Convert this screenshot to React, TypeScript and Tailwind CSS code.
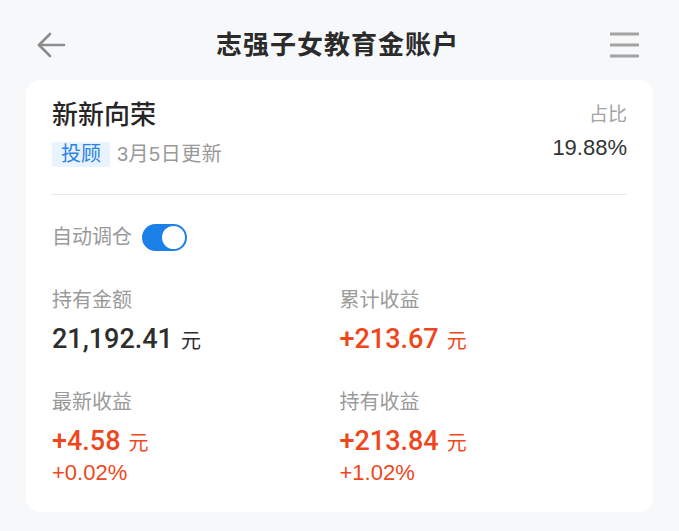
import React from "react";

const FONT = { fontFamily: '"Liberation Sans", "Noto Sans CJK SC", sans-serif' };
const NUM = { fontFamily: 'Roboto, "Liberation Sans", sans-serif' };

function Cell({ label, value, color, pct }: { label: string; value: string; color: string; pct?: string }) {
  return (
    <div className="flex flex-col">
      <div className="h-[24px] leading-[24px] text-[20px] text-[#9a9a9a]">{label}</div>
      <div className={`mt-[11px] h-[32px] leading-[32px] flex items-baseline ${color}`}>
        <span className="text-[27px] font-medium" style={NUM}>{value}</span>
        <span className="ml-[8px] text-[20px]">元</span>
      </div>
      {pct && <div className={`mt-[3px] h-[26px] leading-[26px] text-[22px] ${color}`}>{pct}</div>}
    </div>
  );
}

export default function App() {
  return (
    <div className="w-[679px] h-[531px] bg-[#f7f8fa] overflow-hidden" style={FONT}>
      <div className="h-[80px] pt-[10px] flex items-center justify-between pl-[36px] pr-[40px]">
        <svg width="30" height="28" viewBox="0 0 30 28" fill="none" stroke="#8c8c8c" strokeWidth="2.6" strokeLinecap="round" strokeLinejoin="round">
          <path d="M28 14 H3" />
          <path d="M14 3 L3 14 L14 25" />
        </svg>
        <div className="text-[26px] font-semibold text-[#2b2b2b] tracking-[1px]">志强子女教育金账户</div>
        <svg width="30" height="26" viewBox="0 0 30 26" fill="none" stroke="#a3a3a3" strokeWidth="3">
          <path d="M1 2 H30" />
          <path d="M1 13 H30" />
          <path d="M1 24 H30" />
        </svg>
      </div>
      <div className="mx-[26px] rounded-[14px] bg-white px-[26px] pt-[20px] pb-[26px]">
        <div className="flex justify-between">
          <div className="flex flex-col">
            <div className="h-[30px] leading-[30px] text-[26px] font-medium text-[#262626]">新新向荣</div>
            <div className="mt-[12px] flex items-center">
              <div className="h-[25px] leading-[25px] px-[9px] rounded-[3px] bg-[#e8f3fe] text-[#2a84e6] text-[20px]">投顾</div>
              <div className="ml-[7px] text-[20px] text-[#999999] leading-[25px] tracking-[0.5px]">3月5日更新</div>
            </div>
          </div>
          <div className="flex flex-col items-end">
            <div className="h-[30px] leading-[30px] text-[19px] text-[#a3a3a3]">占比</div>
            <div className="mt-[5px] h-[26px] leading-[26px] text-[22px] text-[#333333]">19.88%</div>
          </div>
        </div>
        <div className="mt-[27px] h-px bg-[#e8e8e8]" />
        <div className="mt-[29px] h-[27px] flex items-center">
          <span className="text-[20px] text-[#9a9a9a] leading-[27px]">自动调仓</span>
          <div className="ml-[10px] w-[45px] h-[27px] rounded-full bg-[#1b80e8] flex items-center justify-end pr-[2px]">
            <div className="w-[23px] h-[23px] rounded-full bg-white" />
          </div>
        </div>
        <div className="mt-[37px] grid grid-cols-2 gap-y-[35px]">
          <Cell label="持有金额" value="21,192.41" color="text-[#2e2e2e]" />
          <Cell label="累计收益" value="+213.67" color="text-[#f0461c]" />
          <Cell label="最新收益" value="+4.58" color="text-[#f0461c]" pct="+0.02%" />
          <Cell label="持有收益" value="+213.84" color="text-[#f0461c]" pct="+1.02%" />
        </div>
      </div>
    </div>
  );
}
